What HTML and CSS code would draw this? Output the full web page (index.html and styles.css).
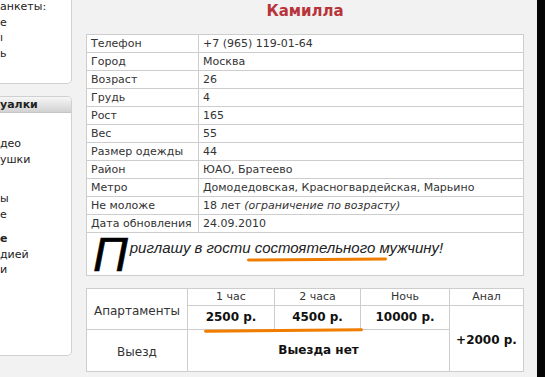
FILE: index.html
```html
<!DOCTYPE html>
<html lang="ru">
<head>
  <meta charset="UTF-8">
  <link rel="stylesheet" href="styles.css">
</head>
<body>

<div class="page">

  <!-- левая колонка -->
  <aside class="side">
    <div class="box box-top">
      <ul class="links">
        <li>анкеты:</li>
        <li>е</li>
        <li>ı</li>
        <li>ь</li>
      </ul>
    </div>

    <div class="box box-menu">
      <div class="box-head">уалки</div>
      <ul class="links first">
        <li>део</li>
        <li>ушки</li>
      </ul>
      <ul class="links group">
        <li>ы</li>
        <li>е</li>
      </ul>
      <ul class="links group2">
        <li class="cur">е</li>
        <li>дией</li>
        <li>и</li>
      </ul>
    </div>
  </aside>

  <!-- анкета -->
  <main class="profile">
    <h1>Камилла</h1>

    <table class="info">
      <tr><td class="label">Телефон</td><td>+7 (965) 119-01-64</td></tr>
      <tr><td class="label">Город</td><td>Москва</td></tr>
      <tr><td class="label">Возраст</td><td>26</td></tr>
      <tr><td class="label">Грудь</td><td>4</td></tr>
      <tr><td class="label">Рост</td><td>165</td></tr>
      <tr><td class="label">Вес</td><td>55</td></tr>
      <tr><td class="label">Размер одежды</td><td>44</td></tr>
      <tr><td class="label">Район</td><td>ЮАО, Братеево</td></tr>
      <tr><td class="label">Метро</td><td>Домодедовская, Красногвардейская, Марьино</td></tr>
      <tr><td class="label">Не моложе</td><td>18 лет <i>(ограничение по возрасту)</i></td></tr>
      <tr><td class="label">Дата обновления</td><td>24.09.2010</td></tr>
      <tr><td colspan="2" class="wish"><span class="cap">П</span>риглашу в гости состоятельного мужчину!</td></tr>
    </table>

    <table class="prices">
      <tr class="r1">
        <td rowspan="2" class="c1 name">Апартаменты</td>
        <td class="c2">1 час</td>
        <td class="c3">2 часа</td>
        <td class="c4">Ночь</td>
        <td>Анал</td>
      </tr>
      <tr class="r2">
        <td class="price">2500 р.</td>
        <td class="price">4500 р.</td>
        <td class="price">10000 р.</td>
        <td rowspan="2" class="price extra">+2000 р.</td>
      </tr>
      <tr class="r3">
        <td class="name">Выезд</td>
        <td colspan="3" class="price">Выезда нет</td>
      </tr>
    </table>

    <!-- пометки маркером -->
    <span class="mark mark-wish"></span>
    <span class="mark mark-price"></span>
  </main>

  <div class="edge"></div>
</div>

</body>
</html>
```

FILE: styles.css
```css
body {
  margin: 0;
  background: #f2f2f2;
  font-family: "DejaVu Sans", Verdana, sans-serif;
  font-size: 11px;
  color: #333;
  overflow: hidden;
}
.page {
  display: flex;
  height: 377px;
}

/* левая колонка */
.side {
  width: 72px;
  flex: none;
}
.box {
  background: #fff;
  border: 1px solid #d0d0d0;
  border-left: none;
  border-radius: 0 5px 5px 0;
  box-sizing: border-box;
}
.box-top {
  margin-top: -10px;
  height: 94px;
  padding-top: 8px;
}
.box-menu {
  margin-top: 12px;
  height: 260px;
}
.box-head {
  height: 15px;
  line-height: 15px;
  font-weight: bold;
  color: #222;
  background: linear-gradient(#f6f6f6, #d2d2d2);
  border-bottom: 1px solid #c4c4c4;
  border-radius: 0 5px 0 0;
}
.links {
  list-style: none;
  margin: 0;
  padding: 0;
  line-height: 15.5px;
  color: #222;
}
.links.first { margin-top: 23px; }
.links.group { margin-top: 24px; }
.links.group2 { margin-top: 9px; }
.links .cur { font-weight: bold; }

/* анкета */
.profile {
  flex: 1;
  position: relative;
  padding: 0 13px 0 14px;
}
h1 {
  margin: 0;
  text-align: center;
  font-size: 15px;
  line-height: 22px;
  color: #b8343a;
}
table {
  width: 100%;
  border-collapse: collapse;
  background: #fff;
}
td {
  border: 1px solid #cdcdcd;
  padding: 1px 4px;
  line-height: 15px;
}
.info {
  margin-top: 12px;
}
.info .label {
  width: 103px;
}
.wish {
  padding: 3px 4px 1px 6px;
  vertical-align: top;
  font: italic 15px "Liberation Sans", Arial, sans-serif;
  line-height: 24px;
  color: #222;
}
.cap {
  float: left;
  font-size: 48px;
  line-height: 38px;
  margin-right: 2px;
  color: #000;
  -webkit-text-stroke: 0.6px #000;
}

.prices {
  margin-top: 12px;
}
.prices td {
  text-align: center;
}
.prices .c1 { width: 92px; }
.prices .c2 { width: 78px; }
.prices .c3 { width: 77px; }
.prices .c4 { width: 80px; }
.prices .r1 td {
  height: 14px;
  line-height: 14px;
}
.prices .name {
  font-size: 12px;
  padding-top: 4px;
}
.prices .r2 .price {
  height: 21px;
}
.prices .r3 td {
  height: 36px;
}
.price {
  font-size: 12px;
  font-weight: bold;
  color: #111;
}
.prices .extra {
  padding-top: 5px;
}

/* пометки маркером */
.mark {
  position: absolute;
  height: 3px;
  border-radius: 2px;
  background: #f07c00;
}
.mark-wish {
  left: 175px;
  top: 258px;
  width: 140px;
  transform: rotate(-0.4deg);
}
.mark-price {
  left: 132px;
  top: 329px;
  width: 159px;
  transform: rotate(-0.5deg);
}

.edge {
  width: 8px;
  flex: none;
  background: #050505;
}
```
